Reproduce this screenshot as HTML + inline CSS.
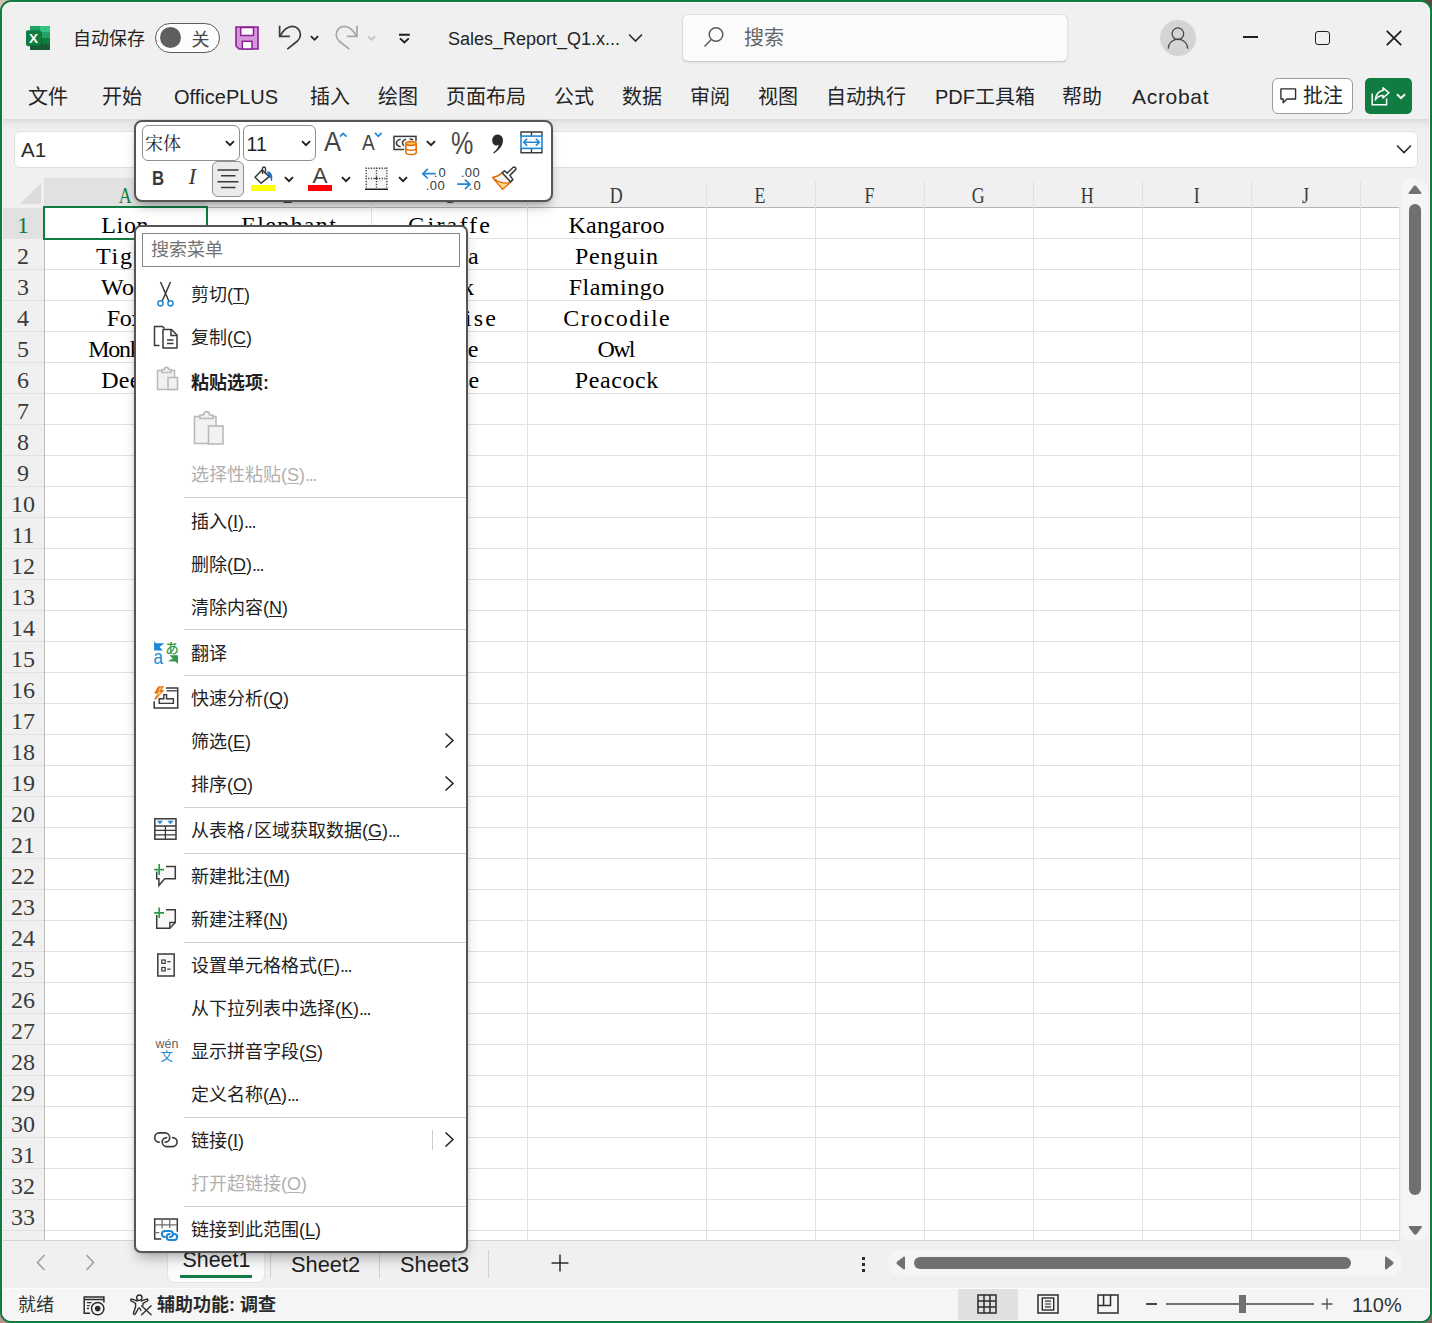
<!DOCTYPE html>
<html lang="zh-CN"><head><meta charset="utf-8"><title>Sales_Report_Q1.xlsx - Excel</title>
<style>
*{box-sizing:border-box;margin:0;padding:0}
html,body{width:1432px;height:1323px;overflow:hidden}
body{position:relative;background:#8c7470;font-family:"Liberation Sans","Noto Sans CJK SC",sans-serif;color:#1f1f1f;font-size:18px}
.abs{position:absolute}
.t{position:absolute;white-space:nowrap;line-height:1}
svg{position:absolute;overflow:visible}
#win{position:absolute;left:0;top:0;width:1432px;height:1323px;border:2px solid #107c41;border-radius:11px;background:#f0f0f0;overflow:hidden}
.tab{position:absolute;top:85px;font-size:20px;line-height:24px;white-space:nowrap;color:#242424}
.rh{position:absolute;left:3px;width:40px;text-align:center;font-family:"Liberation Serif","Noto Serif CJK SC",serif;font-size:24px;line-height:31px;color:#444;height:31px}
.ch{position:absolute;top:178px;height:29px;text-align:center;font-family:"Liberation Serif","Noto Serif CJK SC",serif;font-size:23px;line-height:35px;color:#3b3b3b}
.ch span{display:inline-block;transform:scaleX(.78)}
.cell{position:absolute;height:31px;text-align:center;font-family:"Liberation Serif","Noto Serif CJK SC",serif;font-size:24px;line-height:37px;color:#000;white-space:nowrap}
.vl{position:absolute;top:207px;width:1px;height:1033px;background:#e1e1e1}
.mi{position:absolute;left:191px;font-size:18px;line-height:24px;white-space:nowrap;color:#1f1f1f}
.mi u{text-decoration:underline;text-underline-offset:2px;text-decoration-thickness:1px}
.mi.dis{color:#b0b0b0}
.sep{position:absolute;left:184px;width:282px;height:1px;background:#d1d1d1}
.el{letter-spacing:-1.3px}
</style></head><body>
<div class="abs" style="left:0;top:0;width:20px;height:20px;background:#d9bfb3"></div><div class="abs" style="right:0;top:0;width:20px;height:20px;background:#5f4744"></div><div class="abs" style="left:0;bottom:0;width:20px;height:20px;background:#b8948c"></div><div class="abs" style="right:0;bottom:0;width:20px;height:20px;background:#8a6e66"></div><div id="win"><div class="abs" id="c" style="left:-2px;top:-2px;width:1432px;height:1323px"><svg style="left:26px;top:26px" width="24" height="24" viewBox="0 0 24 24">
<rect x="4" y="0" width="20" height="24" rx="1.5" fill="#21a366"/>
<rect x="14" y="0" width="10" height="6" fill="#33c481"/>
<rect x="4" y="0" width="10" height="6" fill="#21a366"/>
<rect x="14" y="6" width="10" height="6" fill="#21a366"/>
<rect x="4" y="6" width="10" height="6" fill="#107c41"/>
<rect x="4" y="12" width="20" height="6" fill="#107c41"/>
<path d="M4 18h20v4.5a1.5 1.5 0 0 1-1.5 1.5h-17a1.5 1.5 0 0 1-1.5-1.5z" fill="#185c37"/>
<rect x="14" y="0" width="10" height="6" fill="#33c481"/>
<path d="M14 0h8.500a1.500 1.500 0 0 1 1.500 1.500v4.500h-10z" fill="#33c481"/>
<rect x="1" y="5.300" width="15" height="15.200" rx="1.500" fill="#0a4a2a" opacity=".55"/>
<rect x="0" y="4.300" width="15" height="15.400" rx="1.500" fill="#107c41"/>
<text x="7.500" y="16.800" font-family="Liberation Sans,sans-serif" font-weight="bold" font-size="13.500" fill="#fff" text-anchor="middle">X</text>
</svg><div class="t" style="left:73px;top:29px;font-size:18px;line-height:20px;color:#242424">自动保存</div><div class="abs" style="left:155px;top:23px;width:65px;height:30px;border:1px solid #5c5c5c;border-radius:15px;background:#fdfdfd"></div><div class="abs" style="left:160px;top:27px;width:21px;height:21px;border-radius:50%;background:#5f5f5f"></div><div class="t" style="left:191.500px;top:29.500px;font-size:18px;line-height:20px;color:#4a4a4a">关</div><svg style="left:235px;top:26px" width="24" height="24" viewBox="0 0 24 24">
<path d="M1 1h22v22H4l-3-3z" fill="#d698db" stroke="#8a2199" stroke-width="1.600"/>
<rect x="5.700" y="1.500" width="12.800" height="8" fill="#fafafa" stroke="#8a2199" stroke-width="1.500"/>
<rect x="7.300" y="15.300" width="9.700" height="7.700" fill="#fafafa" stroke="#8a2199" stroke-width="1.500"/>
</svg><svg style="left:278px;top:24px" width="24" height="27" viewBox="0 0 24 27" fill="none" stroke="#3a3a3a" stroke-width="1.700">
<path d="M1.600 1.850V12.300H11.900"/><path d="M1.900 12C5.500 6 10 2.400 14.500 2.400C19 2.400 22.400 6 22.400 10.750C22.400 13.500 21 15.500 19.500 17L9.300 25.200"/>
</svg><svg style="left:310px;top:34.500px" width="9" height="6.500" viewBox="0 0 10 7" fill="none" stroke="#1f1f1f" stroke-width="2"><path d="M1 1.200l4 4 4-4"/></svg><svg style="left:336px;top:24px" width="24" height="27" viewBox="0 0 24 27" fill="none" stroke="#a6a6a6" stroke-width="1.700">
<path d="M21 1.850V12.300H10.700"/><path d="M20.700 12C17.100 6 12.600 2.400 8.100 2.400C3.600 2.400 0.200 6 0.200 10.750C0.200 13.500 1.600 15.500 3.100 17L13.300 25.200"/>
</svg><svg style="left:367px;top:34.500px" width="9" height="6.500" viewBox="0 0 10 7" fill="none" stroke="#c4c4c4" stroke-width="2"><path d="M1 1.200l4 4 4-4"/></svg><svg style="left:399px;top:33px" width="11" height="11" viewBox="0 0 11 11" fill="none" stroke="#1f1f1f"><path d="M0 1.800h10.800" stroke-width="2"/><path d="M1 5.400l4.400 4 4.400-4" stroke-width="1.900"/></svg><div class="t" id="fname" style="left:448px;top:28px;font-size:18px;line-height:22px;color:#242424">Sales_Report_Q1.x...</div><svg style="left:628px;top:33px" width="15" height="10" viewBox="0 0 15 10" fill="none" stroke="#2b2b2b" stroke-width="1.600"><path d="M1 1.500l6.500 6.500L14 1.500"/></svg><div class="abs" style="left:682px;top:14px;width:386px;height:48px;background:#fbfbfb;border:1px solid #e0e0e0;border-bottom-color:#cdcdcd;border-left-color:#dadada;border-radius:6px;box-shadow:0 1px 2px rgba(0,0,0,.07)"></div><svg style="left:702.800px;top:25.800px" width="22" height="22" viewBox="0 0 22 22" fill="none" stroke="#5a5a5a" stroke-width="1.500"><circle cx="13" cy="8.500" r="6.800"/><path d="M8.200 13.500L1.500 20.500"/></svg><div class="t" style="left:744px;top:27px;font-size:20px;line-height:22px;color:#666">搜索</div><div class="abs" style="left:1160px;top:20px;width:36px;height:36px;border-radius:50%;background:#d4d4d4"></div><svg style="left:1167px;top:27px" width="23" height="23" viewBox="0 0 23 23" fill="none" stroke="#484848" stroke-width="1.300"><circle cx="10.900" cy="6.700" r="5.800"/><path d="M1.200 21.800a9.750 9.750 0 0 1 19.500 0"/></svg><div class="abs" style="left:1242.500px;top:36px;width:15px;height:2px;background:#1f1f1f"></div><div class="abs" style="left:1314.500px;top:30.500px;width:15px;height:14.500px;border:1.900px solid #1f1f1f;border-radius:3px"></div><svg style="left:1386px;top:30px" width="16" height="16" viewBox="0 0 16 16" fill="none" stroke="#1f1f1f" stroke-width="1.800"><path d="M0.800 0.800l14.400 14.400M15.200 0.800L0.800 15.200"/></svg><div class="tab" id="tab0" style="left:28px">文件</div><div class="tab" id="tab1" style="left:102px">开始</div><div class="tab" id="tab2" style="left:174px">OfficePLUS</div><div class="tab" id="tab3" style="left:310px">插入</div><div class="tab" id="tab4" style="left:378px">绘图</div><div class="tab" id="tab5" style="left:446px">页面布局</div><div class="tab" id="tab6" style="left:554px">公式</div><div class="tab" id="tab7" style="left:622px">数据</div><div class="tab" id="tab8" style="left:690px">审阅</div><div class="tab" id="tab9" style="left:758px">视图</div><div class="tab" id="tab10" style="left:826px">自动执行</div><div class="tab" id="tab11" style="left:935px">PDF工具箱</div><div class="tab" id="tab12" style="left:1062px">帮助</div><div class="tab" id="tab13" style="left:1132px;font-size:21px;letter-spacing:.7px">Acrobat</div><div class="abs" style="left:1272px;top:78px;width:81px;height:36px;background:#fff;border:1px solid #9c9c9c;border-radius:6px"></div><svg style="left:1280px;top:88px" width="16.500" height="15.600" viewBox="0 0 18 17" fill="none" stroke="#2b2b2b" stroke-width="1.500"><path d="M1 1h16v11H7.500L3.500 16v-4H1z" stroke-linejoin="round"/></svg><div class="t" style="left:1303px;top:85px;font-size:20px;line-height:22px;color:#242424">批注</div><div class="abs" style="left:1365px;top:78px;width:47px;height:36px;background:#107c41;border-radius:5px"></div><svg style="left:1371px;top:87px" width="20" height="18" viewBox="0 0 20 18" fill="none" stroke="#fff" stroke-width="1.500"><path d="M1.200 6.400V17.800H15.600V11.500"/><path d="M12 0.800L18 5.800 12 10.900V8.500C8.500 8.500 6 10 4.300 13 4.600 8 7.500 3.800 12 3.400z" stroke-linejoin="round"/></svg><svg style="left:1396px;top:93px" width="10" height="7" viewBox="0 0 10 7" fill="none" stroke="#fff" stroke-width="2"><path d="M1 1.200l4 4 4-4"/></svg><div class="abs" style="left:2px;top:119px;width:1428px;height:11px;background:linear-gradient(#dadada,#e8e8e8 40%,#f0f0f0)"></div><div class="abs" style="left:14px;top:131px;width:1404px;height:37px;background:#fff;border:1px solid #e0e0e0;border-radius:6px"></div><div class="t" style="left:21px;top:138.500px;font-size:20.500px;line-height:22px;color:#2b2b2b">A1</div><svg style="left:1396px;top:144px" width="16" height="10" viewBox="0 0 16 10" fill="none" stroke="#2b2b2b" stroke-width="1.600"><path d="M1 1.500l7 7 7-7"/></svg><div class="abs" style="left:44px;top:207px;width:1355px;height:1033px;background-color:#fff;background-image:linear-gradient(#e1e1e1 1px,transparent 1px);background-size:100% 31px"></div><div class="abs" style="left:2px;top:178px;width:1397px;height:29px;background:#f0f0f0"></div><div class="abs" style="left:44px;top:178px;width:163px;height:29px;background:#e1e1e1"></div><div class="abs" style="left:44px;top:207px;width:1355px;height:1px;background:#b5b5b5"></div><div class="abs" style="left:2px;top:207px;width:43px;height:1033px;background:#f0f0f0"></div><div class="abs" style="left:2px;top:208px;width:43px;height:31px;background:#e1e1e1"></div><div class="abs" style="left:44px;top:207px;width:1px;height:1033px;background:#bdbdbd"></div><svg style="left:19px;top:182px" width="23" height="23" viewBox="0 0 23 23"><path d="M22 0.900V21.800H1z" fill="#dcdcdc"/></svg><div class="vl" style="left:206px"></div><div class="abs" style="left:206px;top:181px;width:1px;height:26px;background:#e2e2e2"></div><div class="vl" style="left:371px"></div><div class="abs" style="left:371px;top:181px;width:1px;height:26px;background:#e2e2e2"></div><div class="vl" style="left:527px"></div><div class="abs" style="left:527px;top:181px;width:1px;height:26px;background:#e2e2e2"></div><div class="vl" style="left:706px"></div><div class="abs" style="left:706px;top:181px;width:1px;height:26px;background:#e2e2e2"></div><div class="vl" style="left:815px"></div><div class="abs" style="left:815px;top:181px;width:1px;height:26px;background:#e2e2e2"></div><div class="vl" style="left:924px"></div><div class="abs" style="left:924px;top:181px;width:1px;height:26px;background:#e2e2e2"></div><div class="vl" style="left:1033px"></div><div class="abs" style="left:1033px;top:181px;width:1px;height:26px;background:#e2e2e2"></div><div class="vl" style="left:1142px"></div><div class="abs" style="left:1142px;top:181px;width:1px;height:26px;background:#e2e2e2"></div><div class="vl" style="left:1251px"></div><div class="abs" style="left:1251px;top:181px;width:1px;height:26px;background:#e2e2e2"></div><div class="vl" style="left:1360px"></div><div class="abs" style="left:1360px;top:181px;width:1px;height:26px;background:#e2e2e2"></div><div class="rh" style="top:210px;color:#107c41">1</div><div class="abs" style="left:2px;top:238px;width:42px;height:1px;background:#e2e2e2"></div><div class="rh" style="top:241px;color:#3b3b3b">2</div><div class="abs" style="left:2px;top:269px;width:42px;height:1px;background:#e2e2e2"></div><div class="rh" style="top:272px;color:#3b3b3b">3</div><div class="abs" style="left:2px;top:300px;width:42px;height:1px;background:#e2e2e2"></div><div class="rh" style="top:303px;color:#3b3b3b">4</div><div class="abs" style="left:2px;top:331px;width:42px;height:1px;background:#e2e2e2"></div><div class="rh" style="top:334px;color:#3b3b3b">5</div><div class="abs" style="left:2px;top:362px;width:42px;height:1px;background:#e2e2e2"></div><div class="rh" style="top:365px;color:#3b3b3b">6</div><div class="abs" style="left:2px;top:393px;width:42px;height:1px;background:#e2e2e2"></div><div class="rh" style="top:396px;color:#3b3b3b">7</div><div class="abs" style="left:2px;top:424px;width:42px;height:1px;background:#e2e2e2"></div><div class="rh" style="top:427px;color:#3b3b3b">8</div><div class="abs" style="left:2px;top:455px;width:42px;height:1px;background:#e2e2e2"></div><div class="rh" style="top:458px;color:#3b3b3b">9</div><div class="abs" style="left:2px;top:486px;width:42px;height:1px;background:#e2e2e2"></div><div class="rh" style="top:489px;color:#3b3b3b">10</div><div class="abs" style="left:2px;top:517px;width:42px;height:1px;background:#e2e2e2"></div><div class="rh" style="top:520px;color:#3b3b3b">11</div><div class="abs" style="left:2px;top:548px;width:42px;height:1px;background:#e2e2e2"></div><div class="rh" style="top:551px;color:#3b3b3b">12</div><div class="abs" style="left:2px;top:579px;width:42px;height:1px;background:#e2e2e2"></div><div class="rh" style="top:582px;color:#3b3b3b">13</div><div class="abs" style="left:2px;top:610px;width:42px;height:1px;background:#e2e2e2"></div><div class="rh" style="top:613px;color:#3b3b3b">14</div><div class="abs" style="left:2px;top:641px;width:42px;height:1px;background:#e2e2e2"></div><div class="rh" style="top:644px;color:#3b3b3b">15</div><div class="abs" style="left:2px;top:672px;width:42px;height:1px;background:#e2e2e2"></div><div class="rh" style="top:675px;color:#3b3b3b">16</div><div class="abs" style="left:2px;top:703px;width:42px;height:1px;background:#e2e2e2"></div><div class="rh" style="top:706px;color:#3b3b3b">17</div><div class="abs" style="left:2px;top:734px;width:42px;height:1px;background:#e2e2e2"></div><div class="rh" style="top:737px;color:#3b3b3b">18</div><div class="abs" style="left:2px;top:765px;width:42px;height:1px;background:#e2e2e2"></div><div class="rh" style="top:768px;color:#3b3b3b">19</div><div class="abs" style="left:2px;top:796px;width:42px;height:1px;background:#e2e2e2"></div><div class="rh" style="top:799px;color:#3b3b3b">20</div><div class="abs" style="left:2px;top:827px;width:42px;height:1px;background:#e2e2e2"></div><div class="rh" style="top:830px;color:#3b3b3b">21</div><div class="abs" style="left:2px;top:858px;width:42px;height:1px;background:#e2e2e2"></div><div class="rh" style="top:861px;color:#3b3b3b">22</div><div class="abs" style="left:2px;top:889px;width:42px;height:1px;background:#e2e2e2"></div><div class="rh" style="top:892px;color:#3b3b3b">23</div><div class="abs" style="left:2px;top:920px;width:42px;height:1px;background:#e2e2e2"></div><div class="rh" style="top:923px;color:#3b3b3b">24</div><div class="abs" style="left:2px;top:951px;width:42px;height:1px;background:#e2e2e2"></div><div class="rh" style="top:954px;color:#3b3b3b">25</div><div class="abs" style="left:2px;top:982px;width:42px;height:1px;background:#e2e2e2"></div><div class="rh" style="top:985px;color:#3b3b3b">26</div><div class="abs" style="left:2px;top:1013px;width:42px;height:1px;background:#e2e2e2"></div><div class="rh" style="top:1016px;color:#3b3b3b">27</div><div class="abs" style="left:2px;top:1044px;width:42px;height:1px;background:#e2e2e2"></div><div class="rh" style="top:1047px;color:#3b3b3b">28</div><div class="abs" style="left:2px;top:1075px;width:42px;height:1px;background:#e2e2e2"></div><div class="rh" style="top:1078px;color:#3b3b3b">29</div><div class="abs" style="left:2px;top:1106px;width:42px;height:1px;background:#e2e2e2"></div><div class="rh" style="top:1109px;color:#3b3b3b">30</div><div class="abs" style="left:2px;top:1137px;width:42px;height:1px;background:#e2e2e2"></div><div class="rh" style="top:1140px;color:#3b3b3b">31</div><div class="abs" style="left:2px;top:1168px;width:42px;height:1px;background:#e2e2e2"></div><div class="rh" style="top:1171px;color:#3b3b3b">32</div><div class="abs" style="left:2px;top:1199px;width:42px;height:1px;background:#e2e2e2"></div><div class="rh" style="top:1202px;color:#3b3b3b">33</div><div class="abs" style="left:2px;top:1230px;width:42px;height:1px;background:#e2e2e2"></div><div class="ch" style="left:44px;width:162px;color:#107c41"><span>A</span></div><div class="ch" style="left:206px;width:165px;color:#3b3b3b"><span>B</span></div><div class="ch" style="left:371px;width:156px;color:#3b3b3b"><span>C</span></div><div class="ch" style="left:527px;width:179px;color:#3b3b3b"><span>D</span></div><div class="ch" style="left:706px;width:109px;color:#3b3b3b"><span>E</span></div><div class="ch" style="left:815px;width:109px;color:#3b3b3b"><span>F</span></div><div class="ch" style="left:924px;width:109px;color:#3b3b3b"><span>G</span></div><div class="ch" style="left:1033px;width:109px;color:#3b3b3b"><span>H</span></div><div class="ch" style="left:1142px;width:109px;color:#3b3b3b"><span>I</span></div><div class="ch" style="left:1251px;width:109px;color:#3b3b3b"><span>J</span></div><div class="cell" style="left:44.3px;top:207px;width:162px;letter-spacing:0.67px">Lion</div><div class="cell" style="left:206.7px;top:207px;width:165px;letter-spacing:1.34px">Elephant</div><div class="cell" style="left:372.1px;top:207px;width:156px;letter-spacing:2.16px">Giraffe</div><div class="cell" style="left:527.1px;top:207px;width:179px;letter-spacing:0.17px">Kangaroo</div><div class="cell" style="left:44.9px;top:238px;width:162px;letter-spacing:1.77px">Tiger</div><div class="cell" style="left:206.4px;top:238px;width:165px;letter-spacing:0.81px">Zebra</div><div class="cell" style="left:371.3px;top:238px;width:156px;letter-spacing:0.54px">Koala</div><div class="cell" style="left:527.4px;top:238px;width:179px;letter-spacing:0.76px">Penguin</div><div class="cell" style="left:44.1px;top:269px;width:162px;letter-spacing:0.15px">Wolf</div><div class="cell" style="left:206.3px;top:269px;width:165px;letter-spacing:0.67px">Bear</div><div class="cell" style="left:369.8px;top:269px;width:156px;letter-spacing:-2.33px">Hawk</div><div class="cell" style="left:527.2px;top:269px;width:179px;letter-spacing:0.50px">Flamingo</div><div class="cell" style="left:43.8px;top:300px;width:162px;letter-spacing:-0.45px">Fox</div><div class="cell" style="left:206.7px;top:300px;width:165px;letter-spacing:1.33px">Rabbit</div><div class="cell" style="left:372.1px;top:300px;width:156px;letter-spacing:2.21px">Tortoise</div><div class="cell" style="left:527.7px;top:300px;width:179px;letter-spacing:1.48px">Crocodile</div><div class="cell" style="left:43.3px;top:331px;width:162px;letter-spacing:-1.33px">Monkey</div><div class="cell" style="left:206.3px;top:331px;width:165px;letter-spacing:0.54px">Horse</div><div class="cell" style="left:371.5px;top:331px;width:156px;letter-spacing:1.07px">Eagle</div><div class="cell" style="left:526.1px;top:331px;width:179px;letter-spacing:-1.78px">Owl</div><div class="cell" style="left:44.2px;top:362px;width:162px;letter-spacing:0.34px">Deer</div><div class="cell" style="left:206.4px;top:362px;width:165px;letter-spacing:0.76px">Dolphin</div><div class="cell" style="left:370.9px;top:362px;width:156px;letter-spacing:-0.27px">Goose</div><div class="cell" style="left:527.3px;top:362px;width:179px;letter-spacing:0.58px">Peacock</div><div class="abs" style="left:43px;top:206px;width:165px;height:34px;border:2px solid #107c41"></div><div class="abs" style="left:1401px;top:178px;width:26.500px;height:1065px;background:#f5f5f5;border-radius:13px"></div><svg style="left:1408px;top:185px" width="14" height="10" viewBox="0 0 14 10"><path d="M7 0.500c0.600 0 1 0.300 1.400 0.800l4.800 6.200c0.500 0.700 0.200 1.500-0.700 1.500H1.500c-0.900 0-1.200-0.800-0.700-1.500l4.800-6.200c0.400-0.500 0.800-0.800 1.400-0.800z" fill="#707070"/></svg><div class="abs" style="left:1409px;top:204px;width:12px;height:991px;background:#707070;border-radius:6px"></div><svg style="left:1407.700px;top:1224.800px" width="14.600" height="10.400" viewBox="0 0 14 10"><path d="M7 9.500c0.600 0 1-0.300 1.400-0.800l4.800-6.200c0.500-0.700 0.200-1.500-0.700-1.500H1.500c-0.900 0-1.200 0.800-0.700 1.500l4.800 6.200c0.400 0.500 0.800 0.800 1.400 0.800z" fill="#707070"/></svg><div class="abs" style="left:1399px;top:207px;width:1px;height:1033px;background:#e1e1e1"></div><div class="abs" style="left:2px;top:1240px;width:1428px;height:48px;background:#f0f0f0"></div><div class="abs" style="left:2px;top:1240px;width:1397px;height:1px;background:#d4d4d4"></div><svg style="left:36px;top:1254px" width="10" height="17" viewBox="0 0 10 17" fill="none" stroke="#a0a0a0" stroke-width="1.600"><path d="M8.500 1L1.500 8.500l7 7.500"/></svg><svg style="left:85px;top:1254px" width="10" height="17" viewBox="0 0 10 17" fill="none" stroke="#a0a0a0" stroke-width="1.600"><path d="M1.500 1l7 7.500-7 7.500"/></svg><div class="abs" style="left:167px;top:1238px;width:98px;height:45px;background:#fbfbfb;border:1px solid #e3e3e3;border-radius:0 0 7px 7px"></div><div class="t" id="sh1" style="left:182.500px;top:1248px;font-size:21.400px;line-height:24px;color:#1f1f1f">Sheet1</div><div class="abs" style="left:180px;top:1275px;width:72px;height:3px;background:#107c41"></div><div class="abs" style="left:270px;top:1250px;width:1px;height:28px;background:#d0d0d0"></div><div class="t" id="sh2" style="left:291px;top:1252.500px;font-size:21.800px;line-height:24px;color:#1f1f1f">Sheet2</div><div class="abs" style="left:379px;top:1250px;width:1px;height:28px;background:#d0d0d0"></div><div class="t" id="sh3" style="left:400px;top:1252.500px;font-size:21.800px;line-height:24px;color:#1f1f1f">Sheet3</div><div class="abs" style="left:488px;top:1250px;width:1px;height:28px;background:#d0d0d0"></div><svg style="left:551px;top:1254px" width="18" height="18" viewBox="0 0 18 18" fill="none" stroke="#2b2b2b" stroke-width="1.500"><path d="M9 0.500v17M0.500 9h17"/></svg><div class="abs" style="left:862px;top:1257px;width:3px;height:3px;background:#2b2b2b"></div><div class="abs" style="left:862px;top:1263px;width:3px;height:3px;background:#2b2b2b"></div><div class="abs" style="left:862px;top:1269px;width:3px;height:3px;background:#2b2b2b"></div><div class="abs" style="left:888px;top:1250px;width:514px;height:26px;background:#f5f5f5;border-radius:13px"></div><svg style="left:896px;top:1256px" width="10" height="14" viewBox="0 0 10 14"><path d="M0.500 7c0-0.600 0.300-1 0.800-1.400l6.200-4.800c0.700-0.500 1.500-0.200 1.500 0.700v11c0 0.900-0.800 1.200-1.500 0.700L1.300 8.400C0.800 8 0.500 7.600 0.500 7z" fill="#707070"/></svg><div class="abs" style="left:914px;top:1257px;width:437px;height:12px;background:#707070;border-radius:6px"></div><svg style="left:1384px;top:1256px" width="10" height="14" viewBox="0 0 10 14"><path d="M9.500 7c0-0.600-0.300-1-0.800-1.400L2.500 0.800C1.800 0.300 1 0.600 1 1.500v11c0 0.900 0.800 1.200 1.500 0.700l6.200-4.800c0.500-0.400 0.800-0.800 0.800-1.400z" fill="#707070"/></svg><div class="abs" style="left:2px;top:1288px;width:1428px;height:33px;background:#f5f5f5;border-top:1px solid #fcfcfc"></div><div class="t" style="left:18px;top:1295px;font-size:18px;line-height:20px;color:#333">就绪</div><svg style="left:83px;top:1295px" width="23" height="22" viewBox="0 0 23 22" fill="none" stroke="#2b2b2b" stroke-width="1.500">
<path d="M1.200 1.900H20.900V7.400M1.200 4.500H20.900M1.200 1.200V18.300H7"/><path d="M3.900 7.700h4.600M3.900 10.600h2.700M3.900 13.500h2.100" stroke-width="1.300"/><circle cx="14.700" cy="13.600" r="6.200"/><circle cx="14.700" cy="13.600" r="2.800" fill="#2b2b2b" stroke="none"/></svg><svg style="left:130px;top:1294px" width="23" height="23" viewBox="0 0 23 23" fill="none" stroke="#2b2b2b" stroke-width="1.400" stroke-linecap="round" stroke-linejoin="round">
<circle cx="9.300" cy="3.700" r="2.700"/>
<path d="M7.200 7c-2.200-0.600-4.200-1.600-5.200-1.900c-1.200-0.300-1.900 1.300-0.700 1.900l4.300 2.300v3.500l-2.100 6.200c-0.400 1.300 1.300 2 1.900 0.800l2.900-5.300c0.400-0.800 1.200-0.800 1.600 0l1 1.900"/>
<path d="M11.400 7c2.200-0.600 4.200-1.600 5.200-1.900 1.200-0.300 1.900 1.300 0.700 1.900l-4.300 2.300v2"/>
<path d="M11.600 11.800l9.500 9M21.100 11.800l-9.500 9" stroke-width="1.300"/></svg><div class="t" style="left:157px;top:1295px;font-size:18px;line-height:20px;color:#2b2b2b;font-weight:bold">辅助功能: 调查</div><div class="abs" style="left:958px;top:1289px;width:60px;height:32px;background:#e0e0e0"></div><svg style="left:977px;top:1294px" width="20" height="20" viewBox="0 0 20 20" fill="none" stroke="#2b2b2b" stroke-width="1.500"><rect x="1" y="1" width="18" height="18"/><path d="M7 1v18M13 1v18M1 7h18M1 13h18"/></svg><svg style="left:1037px;top:1294px" width="22" height="20" viewBox="0 0 22 20" fill="none" stroke="#2b2b2b" stroke-width="1.500"><rect x="1" y="1" width="20" height="18"/><rect x="5.300" y="4" width="11.400" height="12" stroke-width="1.400"/><path d="M8 7.200h6M8 10h6M8 12.800h6" stroke-width="1.200"/></svg><svg style="left:1097px;top:1294px" width="22" height="20" viewBox="0 0 22 20" fill="none" stroke="#2b2b2b" stroke-width="1.500"><rect x="1" y="1" width="20" height="18"/><path d="M6.600 1V11.500M13.500 1V11.500H1"/></svg><div class="abs" style="left:1146px;top:1303.300px;width:11px;height:1.300px;background:#444"></div><div class="abs" style="left:1166px;top:1303px;width:148px;height:1.500px;background:#707070"></div><div class="abs" style="left:1239px;top:1295px;width:7px;height:18px;background:#707070"></div><svg style="left:1321px;top:1298px" width="12" height="12" viewBox="0 0 12 12" fill="none" stroke="#555" stroke-width="1.400"><path d="M6 0.500v11M0.500 6h11"/></svg><div class="t" style="left:1352px;top:1294px;font-size:20px;line-height:22px;color:#333">110%</div><div class="abs" style="left:134px;top:120px;width:419px;height:82px;background:#fff;border:2px solid #555;border-radius:8px;box-shadow:0 7px 12px -3px rgba(0,0,0,.30),0 1px 3px rgba(0,0,0,.08)"></div><div class="abs" style="left:142px;top:125px;width:98px;height:36px;background:#fff;border:1px solid #8f8f8f;border-radius:6px"></div><div class="t" style="left:145px;top:134px;font-size:18px;line-height:20px;color:#1f1f1f;font-family:Liberation Serif,Noto Serif CJK SC,serif">宋体</div><svg style="left:225px;top:140px" width="10" height="7" viewBox="0 0 10 7" fill="none" stroke="#1f1f1f" stroke-width="1.900"><path d="M1 1.200l4 4 4-4"/></svg><div class="abs" style="left:243px;top:125px;width:73px;height:36px;background:#fff;border:1px solid #8f8f8f;border-radius:6px"></div><div class="t" style="left:246.5px;top:133.5px;font-size:19.5px;line-height:20px;color:#1f1f1f">11</div><svg style="left:301px;top:140px" width="10" height="7" viewBox="0 0 10 7" fill="none" stroke="#1f1f1f" stroke-width="1.900"><path d="M1 1.200l4 4 4-4"/></svg><div class="t" style="left:323.800px;top:126.600px;font-size:28.500px;line-height:28px;color:#444;transform:scaleX(.9);transform-origin:0 0">A</div><svg style="left:339.300px;top:131.700px" width="8.400" height="5.600" viewBox="0 0 9 6" fill="none" stroke="#1e88d6" stroke-width="1.800"><path d="M1 5l3.500-3.500L8 5"/></svg><div class="t" style="left:362.200px;top:131.100px;font-size:21.200px;line-height:24px;color:#444;transform:scaleX(.9);transform-origin:0 0">A</div><svg style="left:373.900px;top:132px" width="8.600" height="5.700" viewBox="0 0 9 6" fill="none" stroke="#1e88d6" stroke-width="1.800"><path d="M1 1l3.500 3.500L8 1"/></svg><svg style="left:393px;top:133px" width="26" height="23" viewBox="0 0 26 23" fill="none">
<rect x="1" y="3.400" width="22" height="13.100" stroke="#3a3a3a" stroke-width="1.500"/>
<path d="M7.600 6.100C4.800 7 3.400 8.300 3.400 9.900S4.800 12.900 7.600 13.800M13 6.100C10.600 7 9.450 8.300 9.450 9.900S10.400 12.600 11.800 13.200M16.500 6c1.500 0 2.800 0.300 3.700 0.800" stroke="#3a3a3a" stroke-width="1.500"/>
<path d="M11.200 8.200h13.800v14.500H11.200z" fill="#fff"/>
<path d="M12.900 10.500v8.900c0 1.100 2.300 2 5.150 2s5.150-0.900 5.150-2v-8.900" stroke="#e06a00" stroke-width="1.500"/>
<ellipse cx="18.050" cy="10.500" rx="5.150" ry="1.900" fill="#f7c45a" stroke="#e06a00" stroke-width="1.500"/>
<path d="M12.900 15.200c0 1.100 2.300 2 5.150 2s5.150-0.900 5.150-2" stroke="#e06a00" stroke-width="1.500"/>
</svg><svg style="left:426px;top:140px" width="10" height="7" viewBox="0 0 10 7" fill="none" stroke="#1f1f1f" stroke-width="1.900"><path d="M1 1.200l4 4 4-4"/></svg><div class="t" style="left:450.500px;top:127.500px;font-size:31px;line-height:32px;color:#474747;transform:scaleX(.81);transform-origin:0 0">%</div><svg style="left:491px;top:133.500px" width="13" height="20" viewBox="0 0 13 20"><path d="M6.500 0.500c3 0 5.500 2.300 5.500 5.800 0 5-3.500 9.700-9 13.200l-0.800-1c3.200-2.500 5-5 5.500-7.500-0.500 0.300-1.300 0.400-2 0.400-2.500 0-4.500-2-4.500-5s2.300-5.900 5.300-5.900z" fill="#2b2b2b"/></svg><svg style="left:520px;top:131px" width="23" height="23" viewBox="0 0 23 23" fill="none">
<path d="M0.300 1H22.700M0.300 21.700H22.700M1 0.300V5M22 0.300V5M1 17.500V22.400M22 17.500V22.400M11.500 1V5M11.500 17.500V21.700" stroke="#3a3a3a" stroke-width="1.400"/>
<rect x="1" y="5.100" width="21" height="12.300" fill="#fafafa" stroke="#1e88d6" stroke-width="1.600"/>
<path d="M3.700 11.300H19.300M7.200 7.800L3.700 11.300L7.200 14.800M15.800 7.800L19.300 11.300L15.800 14.800" stroke="#1e88d6" stroke-width="1.600"/>
</svg><div class="t" style="left:152px;top:165.500px;font-size:21px;line-height:24px;color:#3a3a3a;font-weight:bold;transform:scaleX(.8);transform-origin:0 0">B</div><div class="t" style="left:188.500px;top:165px;font-size:23px;line-height:24px;color:#3a3a3a;font-style:italic;font-family:Liberation Serif,serif">I</div><div class="abs" style="left:212px;top:161px;width:32px;height:36px;background:#ebebeb;border:1px solid #8f8f8f;border-radius:6px"></div><svg style="left:217px;top:168.500px" width="22" height="20" viewBox="0 0 22 20" fill="none" stroke="#3a3a3a" stroke-width="1.500"><path d="M0.500 1h21M4 6.800h14.500M0.500 12.700h21M4 18.500h14.500"/></svg><svg style="left:251px;top:165px" width="26" height="26" viewBox="0 0 26 26" fill="none">
<path d="M11 5l7.300 6.600-8.200 6.600-6.100-5.900z" stroke="#3a3a3a" stroke-width="1.500" stroke-linejoin="round"/>
<path d="M11.500 9V3.500c0-2 3-2 3 0v5" stroke="#3a3a3a" stroke-width="1.400"/>
<path d="M16.800 6.800c3.300 0.700 4.700 4.300 3.700 8.700c-0.300-3-1.300-5.300-3.300-6.400z" fill="#1976c8" stroke="#1976c8" stroke-width="1.200" stroke-linejoin="round"/>
<rect x="0" y="20" width="24" height="6" fill="#ffff00"/>
</svg><svg style="left:284px;top:176px" width="10" height="7" viewBox="0 0 10 7" fill="none" stroke="#1f1f1f" stroke-width="1.900"><path d="M1 1.200l4 4 4-4"/></svg><div class="t" style="left:312.500px;top:163px;font-size:22.500px;line-height:26px;color:#444">A</div><div class="abs" style="left:308px;top:185px;width:24px;height:6px;background:#f00"></div><svg style="left:341px;top:176px" width="10" height="7" viewBox="0 0 10 7" fill="none" stroke="#1f1f1f" stroke-width="1.900"><path d="M1 1.200l4 4 4-4"/></svg><svg style="left:365px;top:167px" width="23" height="23" viewBox="0 0 23 23" fill="none" stroke="#3a3a3a"><rect x="1" y="1" width="21" height="20" fill="#f7f7f7" stroke="none"/>
<path d="M0.500 1.200h22M1.200 0.500v21M21.800 0.500v21M11.500 0.500v21M0.500 11.500h22" stroke-width="1.400" stroke-dasharray="1.200 1.500"/>
<path d="M10 11.500h3M11.500 10v3" stroke-width="1.200"/>
<path d="M0 22.200h23" stroke-width="1.500" stroke="#1f1f1f"/></svg><svg style="left:398px;top:176px" width="10" height="7" viewBox="0 0 10 7" fill="none" stroke="#1f1f1f" stroke-width="1.900"><path d="M1 1.200l4 4 4-4"/></svg><svg style="left:422px;top:166px" width="26" height="25" viewBox="0 0 26 25" fill="none">
<path d="M0.800 7.700H13.700M5.800 2.900L0.800 7.700L5.800 12.500" stroke="#1e88d6" stroke-width="1.700"/>
<text x="11.800" y="10.500" font-family="Liberation Sans,sans-serif" font-size="13" letter-spacing="1" fill="#3a3a3a">.0</text>
<text x="3.700" y="23.600" font-family="Liberation Sans,sans-serif" font-size="13" letter-spacing="0.500" fill="#3a3a3a">.00</text></svg><svg style="left:457px;top:166px" width="26" height="25" viewBox="0 0 26 25" fill="none">
<text x="3.700" y="10.500" font-family="Liberation Sans,sans-serif" font-size="13" letter-spacing="0.500" fill="#3a3a3a">.00</text>
<path d="M0.200 18.200H12.700M7.900 13.600L12.900 18.200L7.900 23.200" stroke="#1e88d6" stroke-width="1.700"/>
<text x="11.800" y="23.600" font-family="Liberation Sans,sans-serif" font-size="13" letter-spacing="1" fill="#3a3a3a">.0</text></svg><svg style="left:492px;top:166px" width="26" height="25" viewBox="0 0 26 25" fill="none">
<path d="M0.600 11.500C4.500 10.800 8 9 10.200 6.700L18.600 15.900C16.500 18 13 21 10.600 23.200z" fill="#f6f6f6" stroke="#e06a00" stroke-width="1.500" stroke-linejoin="round"/>
<path d="M5.600 16.300L15.200 17.800 10.600 22z" fill="#fbd983"/>
<path d="M2.900 13.200C7 16.500 12 17.500 17.100 17" stroke="#e06a00" stroke-width="1.400"/>
<path d="M10.200 6.700L12.500 4.800 15.200 7.100 21.300 1.300C22.500 0.300 24.600 2.300 23.600 3.600L17.900 9.400 20.900 13.600 18.600 15.900z" fill="#fafafa" stroke="#3a3a3a" stroke-width="1.500" stroke-linejoin="round"/>
</svg><div class="abs" style="left:134px;top:225px;width:334px;height:1028px;background:#fff;border:2px solid #555;border-radius:7px;box-shadow:0 8px 14px -4px rgba(0,0,0,.32),0 1px 3px rgba(0,0,0,.08)"></div><div class="abs" style="left:142px;top:233px;width:318px;height:34px;background:#fff;border:1px solid #848484"></div><div class="t" style="left:151px;top:239.500px;font-size:18px;line-height:20px;color:#737373">搜索菜单</div><div class="mi" id="mi0" style="top:283px">剪切(<u>T</u>)</div><div class="mi" id="mi1" style="top:326px">复制(<u>C</u>)</div><div class="mi" id="mi2" style="top:371px"><b>粘贴选项:</b></div><div class="mi dis" id="mi3" style="top:463px">选择性粘贴(<u>S</u>)<span class="el">...</span></div><div class="mi" id="mi4" style="top:510px">插入(<u>I</u>)<span class="el">...</span></div><div class="mi" id="mi5" style="top:553px">删除(<u>D</u>)<span class="el">...</span></div><div class="mi" id="mi6" style="top:596px">清除内容(<u>N</u>)</div><div class="mi" id="mi7" style="top:642px">翻译</div><div class="mi" id="mi8" style="top:687px">快速分析(<u>Q</u>)</div><div class="mi" id="mi9" style="top:730px">筛选(<u>E</u>)</div><div class="mi" id="mi10" style="top:773px">排序(<u>O</u>)</div><div class="mi" id="mi11" style="top:819px">从表格<span style="margin:0 2px">/</span>区域获取数据(<u>G</u>)<span class="el">...</span></div><div class="mi" id="mi12" style="top:865px">新建批注(<u>M</u>)</div><div class="mi" id="mi13" style="top:908px">新建注释(<u>N</u>)</div><div class="mi" id="mi14" style="top:954px">设置单元格格式(<u>F</u>)<span class="el">...</span></div><div class="mi" id="mi15" style="top:997px">从下拉列表中选择(<u>K</u>)<span class="el">...</span></div><div class="mi" id="mi16" style="top:1040px">显示拼音字段(<u>S</u>)</div><div class="mi" id="mi17" style="top:1083px">定义名称(<u>A</u>)<span class="el">...</span></div><div class="mi" id="mi18" style="top:1129px">链接(<u>I</u>)</div><div class="mi dis" id="mi19" style="top:1172px">打开超链接(<u>O</u>)</div><div class="mi" id="mi20" style="top:1218px">链接到此范围(<u>L</u>)</div><div class="sep" style="top:497px"></div><div class="sep" style="top:629px"></div><div class="sep" style="top:675px"></div><div class="sep" style="top:807px"></div><div class="sep" style="top:853px"></div><div class="sep" style="top:942px"></div><div class="sep" style="top:1117px"></div><div class="sep" style="top:1206px"></div><svg style="left:444px;top:732px" width="11" height="17" viewBox="0 0 11 17" fill="none" stroke="#1f1f1f" stroke-width="1.500"><path d="M1.500 1.500l7.500 7-7.500 7"/></svg><svg style="left:444px;top:775px" width="11" height="17" viewBox="0 0 11 17" fill="none" stroke="#1f1f1f" stroke-width="1.500"><path d="M1.500 1.500l7.500 7-7.500 7"/></svg><svg style="left:444px;top:1131px" width="11" height="17" viewBox="0 0 11 17" fill="none" stroke="#1f1f1f" stroke-width="1.500"><path d="M1.500 1.500l7.500 7-7.500 7"/></svg><div class="abs" style="left:432px;top:1130px;width:1px;height:20px;background:#cfcfcf"></div><svg style="left:157px;top:281px" width="17" height="26" viewBox="0 0 17 26" fill="none">
<path d="M3.500 1l8.500 19.500M13.500 1L5 20.500" stroke="#3a3a3a" stroke-width="1.500"/>
<circle cx="3.500" cy="22.300" r="2.600" stroke="#1e88d6" stroke-width="1.500"/><circle cx="13.500" cy="22.300" r="2.600" stroke="#1e88d6" stroke-width="1.500"/></svg><svg style="left:153px;top:325px" width="26" height="24" viewBox="0 0 26 24" fill="none" stroke="#3a3a3a" stroke-width="1.500">
<path d="M6.500 20.500H1.500V1.500H9.500l2 2"/><path d="M10 4.500h8.500l5.500 5.500v13H10z" stroke-linejoin="round"/><path d="M18 4.500v6h6"/><path d="M14 15h6.500M14 18.500h6.500" stroke-width="1.300"/></svg><svg style="left:156px;top:366px" width="22" height="25" viewBox="0 0 22 25" fill="none" stroke="#b9b9b9" stroke-width="1.500">
<path d="M1.500 4.500h17v19h-17z" fill="#f0f0f0"/><path d="M6 6.500V3.500h2.500c0-3 4-3 4 0H15v3z" fill="#f6f6f6"/><rect x="12" y="11.500" width="9.500" height="12" fill="#f0f0f0"/></svg><svg style="left:193px;top:410px" width="32" height="36" viewBox="0 0 32 36" fill="none" stroke="#b9b9b9" stroke-width="1.600">
<path d="M1.500 6.500h21.500v27H1.500z" fill="#f2f2f2"/><path d="M7 8.500V5h3.500c0-4.500 6-4.500 6 0H20v3.500z" fill="#f2f2f2"/><rect x="15.500" y="16" width="14.500" height="18" fill="#f2f2f2"/></svg><svg style="left:153px;top:640px" width="26" height="26" viewBox="0 0 26 26" fill="none">
<path d="M1.100 1.300V10.600L9.900 10.400 6.500 7l4.900-3.700L3 3.200z" fill="#1e88d6"/>
<text x="0.400" y="24" font-family="Liberation Sans,sans-serif" font-size="21" fill="#1e88d6" textLength="9.500" lengthAdjust="spacingAndGlyphs">a</text>
<text x="12.300" y="12.800" font-family="Liberation Sans,Noto Sans CJK JP,sans-serif" font-size="13.500" font-weight="500" fill="#2e9a47">あ</text>
<path d="M16.400 15.200H25V24l-2.700-2.400-7.600-0.300 5.100-2.800z" fill="#2e9a47"/></svg><svg style="left:153px;top:685px" width="26" height="25" viewBox="0 0 26 25" fill="none">
<path d="M13 2.900H24.700V23H1.200V16.200" stroke="#3a3a3a" stroke-width="1.500"/><path d="M13.600 5.800H23.800" stroke="#3a3a3a" stroke-width="1.300"/>
<path d="M6.200 13.700h4.600V9.600h2.800v4.100h6.800v4.700H6.200z" stroke="#3a3a3a" stroke-width="1.400" fill="#f6f6f6"/>
<path d="M5.200 1.200h6.200L8.300 5.100h3L3 14.600H1l3.500-6.100H1z" fill="#e8730c"/><path d="M6.500 2.500h2.300L6 7h2.500L4 12z" fill="#fbd36b"/></svg><svg style="left:154px;top:818px" width="23" height="22" viewBox="0 0 23 22" fill="none" stroke="#3a3a3a" stroke-width="1.500">
<rect x="0.800" y="0.800" width="21.200" height="20.400" fill="#fafafa"/><path d="M0.800 8h21.200M0.800 12.400h21.200M0.800 16.800h21.200M11.400 8v13.200" stroke-width="1.300"/>
<path d="M3 2.800h6l-3 3.400z" fill="#1e88d6" stroke="none"/><path d="M13.500 2.800h6l-3 3.400z" fill="#1e88d6" stroke="none"/></svg><svg style="left:153px;top:864px" width="25" height="24" viewBox="0 0 25 24" fill="none">
<path d="M13 2.500H22.300V14.800H11.700L5.900 21.500V14.800H3.700V7.500" stroke="#3a3a3a" stroke-width="1.500" fill="#f8f8f8"/>
<path d="M6.200 0v11M1.200 5.600h9.800" stroke="#2e9a47" stroke-width="1.700"/></svg><svg style="left:153px;top:907px" width="25" height="25" viewBox="0 0 25 25" fill="none">
<path d="M13 2.800H22.300V15.500L16.800 21.200H3.700V8" stroke="#3a3a3a" stroke-width="1.500" fill="#f8f8f8"/><path d="M22.300 15.500H16.800V21.200" stroke="#3a3a3a" stroke-width="1.400"/>
<path d="M6.200 0.400v10.600M1.200 5.900h9.800" stroke="#2e9a47" stroke-width="1.700"/></svg><svg style="left:157px;top:953px" width="18" height="24" viewBox="0 0 18 24" fill="none" stroke="#3a3a3a" stroke-width="1.500">
<rect x="0.800" y="1" width="16.400" height="22" fill="#f8f8f8"/><rect x="4.800" y="7" width="3.400" height="3.400" stroke-width="1.200"/><rect x="4.800" y="14.500" width="3.400" height="3.400" stroke-width="1.200"/><path d="M10.300 8.700h3.200M10.300 16.200h3.200" stroke-width="1.300"/></svg><div class="t" style="left:155.500px;top:1038px;font-size:12.500px;line-height:13px;color:#5f5f5f">wén</div><div class="t" style="left:160.500px;top:1050.500px;font-size:12.500px;line-height:13px;color:#1e88d6">文</div><svg style="left:152px;top:1130px" width="28" height="24" viewBox="0 0 28 24" fill="none" stroke="#3a3a3a" stroke-width="1.600" stroke-linecap="round">
<path d="M7.350 12.200a4.650 4.650 0 0 1 0-9.300H13.050a4.650 4.650 0 0 1 0 9.300"/><path d="M20.600 7.600a4.500 4.500 0 0 1 0 9H14.700a4.500 4.500 0 0 1 0-9"/></svg><svg style="left:153px;top:1217px" width="27" height="26" viewBox="0 0 27 26" fill="none">
<path d="M1.700 1.900H24.300M1.700 1.200V22.700M24.300 1.200V14.800M1.700 22H8.300" stroke="#3a3a3a" stroke-width="1.500"/>
<path d="M1.700 7.800H24.300M9.100 1.900V11.600M16.700 1.900V11M1.700 15.700H6.300" stroke="#6e6e6e" stroke-width="1.300"/>
<path d="M11.950 20.100a3.050 3.050 0 0 1 0-6.100H16.850a3.050 3.050 0 0 1 0 6.100" stroke="#1e88d6" stroke-width="2" stroke-linecap="round"/>
<path d="M21.200 17.100a2.900 2.900 0 0 1 0 5.800H16.600a2.900 2.900 0 0 1 0-5.800" stroke="#1e88d6" stroke-width="2" stroke-linecap="round"/></svg><div class="abs" style="left:2px;top:2px;width:1428px;height:1319px;border:1px solid rgba(255,255,255,.75);border-radius:9px;pointer-events:none"></div></div></div></body></html>
